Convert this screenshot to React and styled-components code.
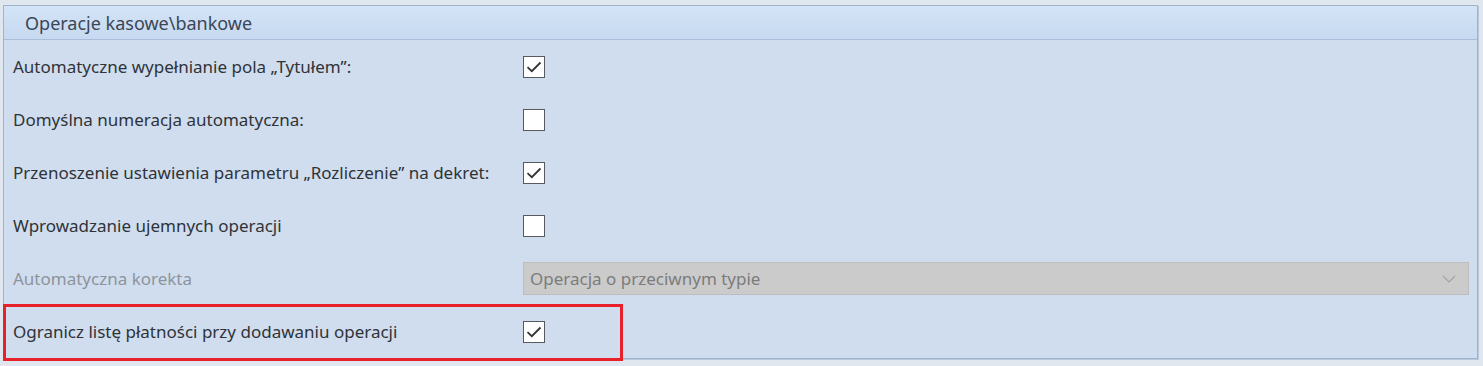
import React from 'react';
import styled, { createGlobalStyle } from 'styled-components';

const GlobalStyle = createGlobalStyle`
  html, body {
    margin: 0;
    padding: 0;
    background: #e1e7ef;
  }
`;

const Page = styled.div`
  padding: 5px 5px 5px 3px;
  font-family: 'Noto Sans', 'Open Sans', sans-serif;
`;

const Panel = styled.div`
  border: 1px solid #9fb3cf;
  box-shadow: 1px 1px 0 #b7c7dc;
  background: #d0ddee;
`;

const Header = styled.div`
  height: 33px;
  display: flex;
  align-items: center;
  padding-left: 21px;
  background: linear-gradient(#d4e4f7, #c6d9f0);
  border-bottom: 1px solid #a8bdd8;
  color: #3a4656;
  font-size: 18px;
`;

const Row = styled.div`
  position: relative;
  height: 53px;
  display: grid;
  grid-template-columns: 510px 1fr;
  align-items: center;
  padding: 0 8px 0 9px;
`;

const Label = styled.span`
  font-size: 17px;
  color: ${(p) => (p.$disabled ? '#8d949c' : '#2f3338')};
`;

const Box = styled.span`
  width: 20px;
  height: 20px;
  border: 1.5px solid #555a60;
  background: #ffffff;
  display: flex;
  align-items: center;
  justify-content: center;
`;

const Select = styled.div`
  height: 31px;
  display: flex;
  align-items: center;
  justify-content: space-between;
  padding: 0 12px 0 6px;
  background: #cbcbcb;
  border: 1px solid #bebebe;
  color: #7c7c7c;
  font-size: 17px;
`;

const Highlight = styled.div`
  position: absolute;
  left: -1px;
  top: -1px;
  width: 620px;
  bottom: -3px;
  border: 3px solid #e8202a;
  box-sizing: border-box;
  pointer-events: none;
`;

const Check = () => (
  <svg width="16" height="14" viewBox="0 0 16 14">
    <path d="M1.5 7.2 L5.8 11.2 L14.5 2.5" fill="none" stroke="#333" strokeWidth="1.8" />
  </svg>
);

const Checkbox = ({ checked }) => <Box>{checked && <Check />}</Box>;

const Chevron = () => (
  <svg width="14" height="8" viewBox="0 0 14 8">
    <path d="M1 1 L7 7 L13 1" fill="none" stroke="#a3a3a3" strokeWidth="1.2" />
  </svg>
);

const rows = [
  { label: 'Automatyczne wypełnianie pola „Tytułem”:', checked: true },
  { label: 'Domyślna numeracja automatyczna:', checked: false },
  { label: 'Przenoszenie ustawienia parametru „Rozliczenie” na dekret:', checked: true },
  { label: 'Wprowadzanie ujemnych operacji', checked: false },
];

const App = () => (
  <Page>
    <GlobalStyle />
    <Panel>
      <Header>Operacje kasowe\bankowe</Header>
      {rows.map((r) => (
        <Row key={r.label}>
          <Label>{r.label}</Label>
          <Checkbox checked={r.checked} />
        </Row>
      ))}
      <Row>
        <Label $disabled>Automatyczna korekta</Label>
        <Select>
          <span>Operacja o przeciwnym typie</span>
          <Chevron />
        </Select>
      </Row>
      <Row>
        <Label>Ogranicz listę płatności przy dodawaniu operacji</Label>
        <Checkbox checked />
        <Highlight />
      </Row>
    </Panel>
  </Page>
);

export default App;
